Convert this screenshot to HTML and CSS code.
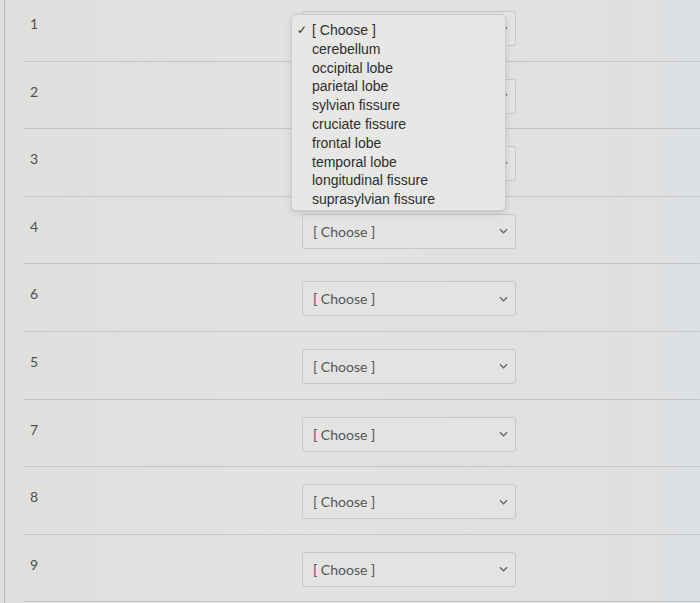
FILE: index.html
```html
<!DOCTYPE html>
<html>
<head>
<meta charset="utf-8">
<link rel="stylesheet" href="styles.css">
</head>
<body>
<div class="page">
  <div class="rows">
    <div class="row"><span class="label">1</span><div class="select"><span>[ Choose ]</span><svg class="chev" viewBox="0 0 10 6"><path d="M1 1 L5 5 L9 1"/></svg></div></div>
    <div class="row"><span class="label">2</span><div class="select"><span>[ Choose ]</span><svg class="chev" viewBox="0 0 10 6"><path d="M1 1 L5 5 L9 1"/></svg></div></div>
    <div class="row"><span class="label">3</span><div class="select"><span>[ Choose ]</span><svg class="chev" viewBox="0 0 10 6"><path d="M1 1 L5 5 L9 1"/></svg></div></div>
    <div class="row"><span class="label">4</span><div class="select"><span>[ Choose ]</span><svg class="chev" viewBox="0 0 10 6"><path d="M1 1 L5 5 L9 1"/></svg></div></div>
    <div class="row"><span class="label">6</span><div class="select"><span>[ Choose ]</span><svg class="chev" viewBox="0 0 10 6"><path d="M1 1 L5 5 L9 1"/></svg></div></div>
    <div class="row"><span class="label">5</span><div class="select"><span>[ Choose ]</span><svg class="chev" viewBox="0 0 10 6"><path d="M1 1 L5 5 L9 1"/></svg></div></div>
    <div class="row"><span class="label">7</span><div class="select"><span>[ Choose ]</span><svg class="chev" viewBox="0 0 10 6"><path d="M1 1 L5 5 L9 1"/></svg></div></div>
    <div class="row"><span class="label">8</span><div class="select"><span>[ Choose ]</span><svg class="chev" viewBox="0 0 10 6"><path d="M1 1 L5 5 L9 1"/></svg></div></div>
    <div class="row"><span class="label">9</span><div class="select"><span>[ Choose ]</span><svg class="chev" viewBox="0 0 10 6"><path d="M1 1 L5 5 L9 1"/></svg></div></div>
  </div>
  <ul class="menu">
    <li><span class="check">✓</span>[ Choose ]</li>
    <li>cerebellum</li>
    <li>occipital lobe</li>
    <li>parietal lobe</li>
    <li>sylvian fissure</li>
    <li>cruciate fissure</li>
    <li>frontal lobe</li>
    <li>temporal lobe</li>
    <li>longitudinal fissure</li>
    <li>suprasylvian fissure</li>
  </ul>
</div>
</body>
</html>
```
FILE: styles.css
```css
html, body {
  margin: 0;
  padding: 0;
  width: 700px;
  height: 603px;
  overflow: hidden;
  background: #e0e0de;
}
.page {
  position: relative;
  display: flow-root;
  width: 696px;
  height: 603px;
  box-sizing: border-box;
  margin-left: 4px;
  border-left: 1px solid #b9b9b7;
  background: linear-gradient(90deg, #dfdfdd 0%, #e2e2e0 40%, #e0e0df 80%, #dde0e3 100%);
  font-family: Lato, "Open Sans", sans-serif;
}
.rows {
  margin-top: -6px;
  margin-left: 19px;
}
.row {
  display: flex;
  align-items: flex-start;
  box-sizing: border-box;
  height: 67.6px;
  padding-top: 17px;
  border-bottom: 1px solid #c4c4c2;
}
.label {
  width: 278px;
  padding-left: 6px;
  box-sizing: border-box;
  font-size: 14px;
  line-height: 18px;
  margin-top: 4px;
  color: #505050;
}
.select {
  width: 214px;
  height: 35px;
  box-sizing: border-box;
  border: 1px solid #c6c6c4;
  border-radius: 3px;
  background: #e3e3e1;
  display: flex;
  align-items: center;
  justify-content: space-between;
  padding: 0 7px 0 10px;
  font-size: 14px;
  color: #555;
}
.chev {
  width: 9px;
  height: 6px;
  fill: none;
  stroke: #666;
  stroke-width: 1.4;
}
.menu {
  position: absolute;
  left: 286px;
  top: 14px;
  width: 215px;
  height: 197px;
  box-sizing: border-box;
  margin: 0;
  padding: 6px 0 0 20px;
  list-style: none;
  background: #e7e7e6;
  border: 1px solid #cbcbc9;
  border-radius: 5px;
  box-shadow: 0 2px 6px rgba(0,0,0,0.12);
  font-family: "Liberation Sans", Arial, sans-serif;
  font-size: 14px;
  line-height: 18.8px;
  color: #2e2e2e;
}
.menu li {
  position: relative;
  white-space: nowrap;
}
.check {
  position: absolute;
  left: -15px;
  top: 0;
  font-size: 12px;
  color: #333;
}
```
